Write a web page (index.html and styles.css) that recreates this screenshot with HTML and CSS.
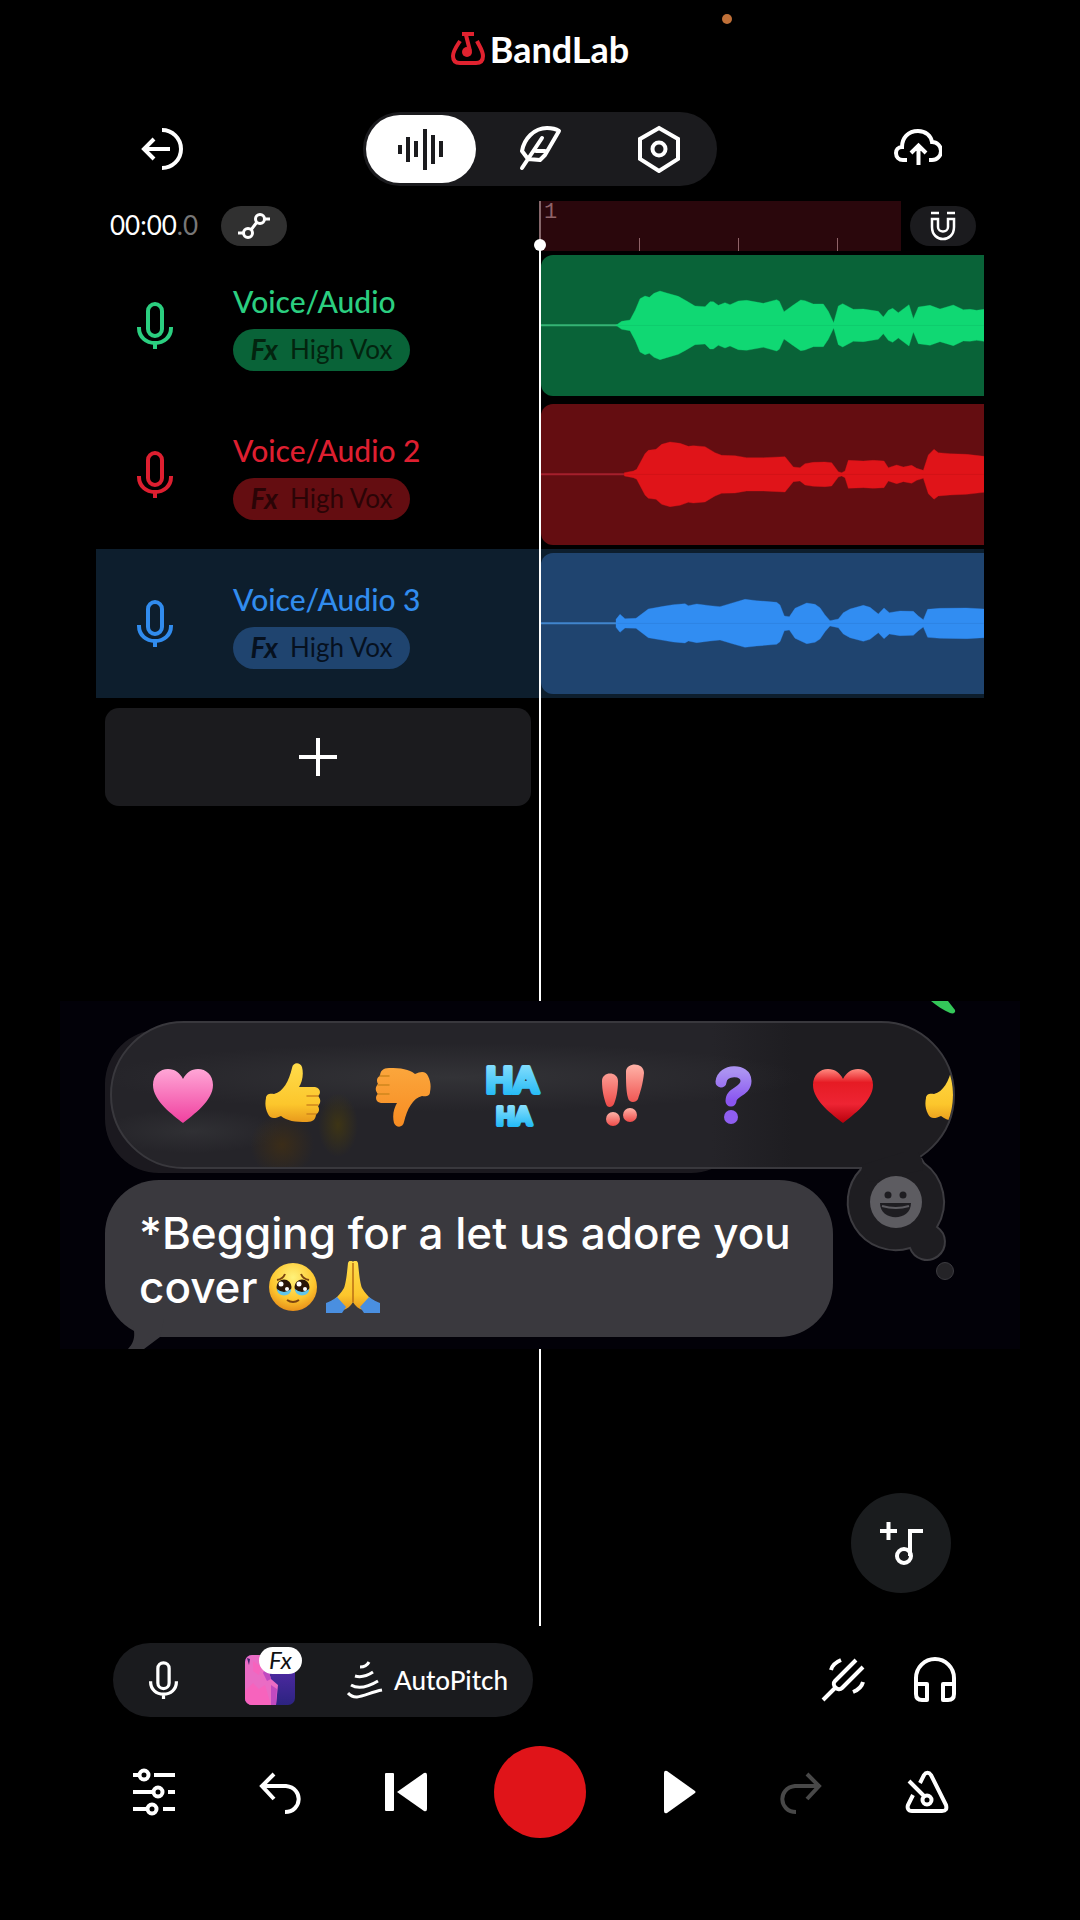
FILE: index.html
```html
<!DOCTYPE html>
<html lang="en">
<head>
<meta charset="utf-8">
<meta name="viewport" content="width=device-width, initial-scale=1">
<title>BandLab Studio</title>
<link rel="stylesheet" href="styles.css">
</head>
<body>
<svg class="defs" width="0" height="0" aria-hidden="true">
  <defs>
    <linearGradient id="pink" x1="0" y1="0" x2="0" y2="1"><stop offset="0" stop-color="#ffa6d6"/><stop offset="1" stop-color="#f0409f"/></linearGradient>
    <linearGradient id="red" x1="0" y1="0" x2="0" y2="1"><stop offset="0" stop-color="#ff8a80"/><stop offset=".25" stop-color="#e61b24"/><stop offset=".65" stop-color="#ee2433"/><stop offset="1" stop-color="#b8000c"/></linearGradient>
    <linearGradient id="yellow" x1="0" y1="0" x2="0" y2="1"><stop offset="0" stop-color="#ffdc4a"/><stop offset=".7" stop-color="#fcc62c"/><stop offset="1" stop-color="#e89a1c"/></linearGradient>
    <linearGradient id="orange" x1="0" y1="1" x2="0" y2="0"><stop offset="0" stop-color="#fba63c"/><stop offset="1" stop-color="#f78c22"/></linearGradient>
    <linearGradient id="coral" x1="0" y1="0" x2="0" y2="1"><stop offset="0" stop-color="#ffb3a8"/><stop offset="1" stop-color="#ee4a48"/></linearGradient>
    <linearGradient id="violet" x1="0" y1="0" x2="0" y2="1"><stop offset="0" stop-color="#ab92f2"/><stop offset="1" stop-color="#8a55f0"/></linearGradient>
    <linearGradient id="sky" x1="0" y1="0" x2="0" y2="1"><stop offset="0" stop-color="#9be6ff"/><stop offset="1" stop-color="#14b4f4"/></linearGradient>
    <radialGradient id="face" cx=".5" cy=".3" r=".7"><stop offset="0" stop-color="#fff27a"/><stop offset=".65" stop-color="#fdc62e"/><stop offset="1" stop-color="#e8901a"/></radialGradient>
    <symbol id="mic" viewBox="0 0 36 48">
      <g fill="none" stroke="currentColor" stroke-width="4">
        <rect x="11" y="2" width="14" height="32" rx="7"/>
        <path d="M2 25v1c0 9 7 15 16 15s16-6 16-15v-1M18 41v6"/>
      </g>
    </symbol>
    <symbol id="heart" viewBox="0 0 64 64">
      <path d="M32 60C22 52 2 38 2 22 2 12 9 6 17 6c7 0 12 4 15 10C35 10 40 6 47 6c8 0 15 6 15 16 0 16-20 30-30 38z"/>
    </symbol>
    <symbol id="thumb" viewBox="0 0 64 64">
      <path d="M5 35c0-4 4-5 8-4C22 29 28 18 31 5c1-6 8-6 10-1 2 8 0 15-3 20h16c6 1 6 7 3 9 3 3 3 7 0 10 2 3 1 7-2 8 0 5-3 8-9 8-12 0-20-1-26-6-6 3-11 3-13-2-3-6-3-11-2-16z"/>
      <path d="M46 33h11M46 42h11M46 51h9" fill="none" stroke="#cf861c" stroke-width="1.5" stroke-linecap="round"/>
    </symbol>
  </defs>
</svg>

<div class="app">
  <header class="brand">
    <svg class="brand-logo" viewBox="0 0 34 34" aria-hidden="true">
      <path d="M9 9C5 15 2 19 2 24c0 5 3 7 7 7h16c4 0 7-2 7-7 0-5-3-9-6-15" fill="none" stroke="#e0222f" stroke-width="4"/>
      <path d="M11 2h12M15 3l4 16" fill="none" stroke="#e0222f" stroke-width="4"/>
      <circle cx="16" cy="20" r="5" fill="#e0222f"/>
    </svg>
    <h1 class="brand-name">BandLab</h1>
    <span class="mic-indicator"></span>
  </header>

  <nav class="toolbar">
    <button class="icon-button" aria-label="Exit">
      <svg width="44" height="44" viewBox="0 0 44 44" fill="none" stroke="#fff" stroke-width="4"><path d="M22 3c10 0 19 8 19 19s-9 19-19 19M3 22h27M14 12L4 22l10 10"/></svg>
    </button>
    <div class="view-tabs">
      <button class="view-tab active" aria-label="Tracks">
        <svg width="48" height="48" viewBox="0 0 48 48" fill="none" stroke="#1b1b1e" stroke-width="4"><path d="M3 20v9M11 12v25M19 16v16M28 4v41M36 10v29M44 16v16"/></svg>
      </button>
      <button class="view-tab" aria-label="Lyrics">
        <svg width="48" height="48" viewBox="0 0 48 48" fill="none" stroke="#fff" stroke-width="4" stroke-linecap="round" stroke-linejoin="round"><path d="M6 43l6-9 14-21M12 34L6 26C8 14 18 3 31 3c5 0 9 1 12 3L29 30l-5 5-12-1M20 26h9"/></svg>
      </button>
      <button class="view-tab" aria-label="Settings">
        <svg width="48" height="48" viewBox="0 0 48 48" fill="none" stroke="#fff" stroke-width="4"><path d="M24 3l19 11v20L24 46 5 34V14z"/><circle cx="24" cy="24" r="6.5"/></svg>
      </button>
    </div>
    <button class="icon-button" aria-label="Upload">
      <svg width="48" height="48" viewBox="0 0 48 48" fill="none" stroke="#fff" stroke-width="4"><path d="M13 35H9c-4 0-7-3-7-7 0-3 2-6 6-6 0-9 6-16 16-16 8 0 13 5 14 11 5 0 9 4 9 9s-4 9-9 9h-3M24.500 40V22M17 28l7.500-7.500L32 28"/></svg>
    </button>
  </nav>

  <main class="timeline">
    <div class="ruler-row">
      <div class="clock-cell">
        <time class="clock">00:00<span class="clock-fraction">.0</span></time>
        <button class="pill-button light" aria-label="Automation">
          <svg width="34" height="28" viewBox="0 0 34 28" fill="none" stroke="#fff" stroke-width="3"><circle cx="11" cy="21" r="4.500"/><circle cx="23" cy="7" r="4.500"/><path d="M1 21h6M14 18l6-8M27 7h6"/></svg>
        </button>
      </div>
      <div class="ruler-cell">
        <div class="ruler"><span class="bar-number">1</span><i class="tick"></i><i class="tick"></i><i class="tick"></i></div>
        <button class="pill-button" aria-label="Snap to grid">
          <svg width="28" height="32" viewBox="0 0 28 32" fill="none" stroke="#fff" stroke-width="2.500"><path d="M2 3h8M18 3h8M3 9h6v8c0 6 10 6 10 0V9h6v8c0 16-22 16-22 0z"/></svg>
        </button>
      </div>
    </div>

    <section class="track green">
      <div class="track-head">
        <svg class="track-mic" aria-hidden="true"><use href="#mic"/></svg>
        <div class="track-info">
          <h2 class="track-name">Voice/Audio</h2>
          <button class="fx-chip"><b class="fx">Fx</b>High Vox</button>
        </div>
      </div>
      <div class="clip">
        <svg class="wave" viewBox="33 0 1329 423" preserveAspectRatio="none" aria-hidden="true">
          <g transform="translate(0 211)">
            <path class="silence" d="M33 0H262"/>
            <path id="wave1" d="M258 0L275 12 300 16 316 46 330 80 345 88 358 84 372 96 390 103 410 97 445 87 470 73 495 58 525 56 540 71 550 71 565 60 585 68 600 62 625 73 650 75 700 66 740 77 748 72 762 41 790 61 812 76 825 74 850 64 880 64 895 42 911 8 925 58 938 65 970 48 1000 49 1045 42 1060 25 1075 45 1088 51 1105 38 1137 62 1150 20 1165 55 1200 60 1230 49 1270 61 1300 47 1320 48 1340 45 1362 48V0z"/>
            <use href="#wave1" transform="scale(1 -1)"/>
          </g>
        </svg>
      </div>
    </section>

    <section class="track red">
      <div class="track-head">
        <svg class="track-mic" aria-hidden="true"><use href="#mic"/></svg>
        <div class="track-info">
          <h2 class="track-name">Voice/Audio 2</h2>
          <button class="fx-chip"><b class="fx">Fx</b>High Vox</button>
        </div>
      </div>
      <div class="clip">
        <svg class="wave" viewBox="33 0 1329 423" preserveAspectRatio="none" aria-hidden="true">
          <g transform="translate(0 211)">
            <path class="silence" d="M33 0H290"/>
            <path id="wave2" d="M283 0V5L310 10 320 15 345 62 355 72 378 75 395 90 420 97 450 93 475 84 490 86 525 83 555 65 575 57 615 56 650 50 700 50 765 53 790 22 810 20 825 32 850 36 885 37 905 35 925 8 935 5 945 10 955 42 1000 40 1030 42 1062 40 1075 20 1100 28 1120 22 1145 27 1160 18 1180 12 1195 58 1212 75 1225 65 1260 62 1310 60 1362 54V0z"/>
            <use href="#wave2" transform="scale(1 -1)"/>
          </g>
        </svg>
      </div>
    </section>

    <section class="track blue selected">
      <div class="track-head">
        <svg class="track-mic" aria-hidden="true"><use href="#mic"/></svg>
        <div class="track-info">
          <h2 class="track-name">Voice/Audio 3</h2>
          <button class="fx-chip"><b class="fx">Fx</b>High Vox</button>
        </div>
      </div>
      <div class="clip">
        <svg class="wave" viewBox="33 0 1329 423" preserveAspectRatio="none" aria-hidden="true">
          <g transform="translate(0 211)">
            <path class="silence" d="M33 0H262"/>
            <path id="wave3" d="M258 0V12L270 27 285 14 318 15 355 43 400 51 430 56 455 58 465 59 475 53 500 58 540 53 570 50 610 62 645 72 680 68 740 63 750 55 763 22 778 20 795 45 830 61 855 57 870 47 885 25 900 8 925 13 940 32 960 43 1000 54 1020 48 1045 28 1062 46 1078 32 1110 37 1150 36 1165 22 1180 11 1193 42 1230 45 1310 46 1362 43V0z"/>
            <use href="#wave3" transform="scale(1 -1)"/>
          </g>
        </svg>
      </div>
    </section>

    <button class="add-track" aria-label="Add track">
      <svg width="40" height="40" viewBox="0 0 40 40" stroke="#fff" stroke-width="4"><path d="M20 1v38M1 20h38"/></svg>
    </button>

    <div class="playhead"></div>

    <aside class="message-overlay">
      <svg class="leaf" width="28" height="13" viewBox="0 0 28 13" aria-hidden="true"><path d="M2 0h17l7 9c1 3-2 4-5 3C14 9 8 5 2 0z" fill="#34c759"/></svg>
      <div class="ghost-bubble"></div>
      <div class="reactions">
        <button class="reaction" aria-label="Pink heart"><svg class="emoji" fill="url(#pink)"><use href="#heart"/></svg></button>
        <button class="reaction" aria-label="Thumbs up"><svg class="emoji" fill="url(#yellow)"><use href="#thumb"/></svg></button>
        <button class="reaction" aria-label="Thumbs down"><svg class="emoji" viewBox="0 0 64 64" fill="url(#orange)"><use href="#thumb" width="64" height="64" transform="rotate(180 32 32)"/></svg></button>
        <button class="reaction" aria-label="Ha ha">
          <svg class="emoji haha" viewBox="0 0 64 64"><text x="31" y="30" font-size="36">HA</text><text x="33" y="62" font-size="24">HA</text></svg>
        </button>
        <button class="reaction" aria-label="Emphasize">
          <svg class="emoji" viewBox="0 0 64 64" fill="url(#coral)"><path d="M11 18c0-10 16-10 16 0 0 10-2 18-4 23-2 4-7 4-8 0-2-6-4-13-4-23zM35 8c1-9 18-9 18 2-1 11-4 20-6 26-2 4-9 4-10-1-2-7-2-17-2-27z"/><circle cx="22" cy="56" r="7"/><circle cx="39" cy="52" r="7"/></svg>
        </button>
        <button class="reaction" aria-label="Question">
          <svg class="emoji" viewBox="0 0 64 64"><path d="M20 19C21 6 45 5 45 18c0 11-15 10-15 20" fill="none" stroke="url(#violet)" stroke-width="11" stroke-linecap="round"/><circle cx="30" cy="54" r="7" fill="#8f5ef0"/></svg>
        </button>
        <button class="reaction" aria-label="Red heart"><svg class="emoji" fill="url(#red)"><use href="#heart"/></svg></button>
        <button class="reaction" aria-label="Thumbs up"><svg class="emoji" fill="url(#yellow)"><use href="#thumb"/></svg></button>
      </div>
      <svg class="thought" width="130" height="150" viewBox="0 0 130 150" role="img" aria-label="More reactions">
        <path d="M21 29A48 48 0 0 0 70 108A18 18 0 1 0 97 87A48 48 0 0 0 84 23L81 18" fill="#1e1d21" stroke="#3c3b40" stroke-width="2"/>
        <path d="M22 25V31L30 42 83 30 82 20 78 12H64z" fill="#1e1d21"/>
        <circle cx="105" cy="131" r="8.500" fill="#242327" stroke="#3c3b40"/>
        <circle cx="56" cy="62" r="26" fill="#5d5c61"/>
        <circle cx="48" cy="55" r="3.500" fill="#1e1d21"/><circle cx="63" cy="55" r="3.500" fill="#1e1d21"/>
        <path d="M40 63h31c0 19-31 19-31 0z" fill="#1e1d21"/><path d="M42 66q14 4 27 0" fill="none" stroke="#5d5c61" stroke-width="2"/>
      </svg>
      <p class="bubble">*Begging for a let us adore you cover
        <span class="inline-emojis">
          <svg width="48" height="48" viewBox="0 0 48 48" role="img" aria-label="Face holding back tears">
            <circle cx="24" cy="24" r="24" fill="url(#face)"/>
            <path d="M8 17q6-1 8-6M40 17q-6-1-8-6" fill="none" stroke="#7a4310" stroke-width="2"/>
            <circle cx="15" cy="24" r="7.500" fill="#2a1608"/><circle cx="33" cy="24" r="7.500" fill="#2a1608"/>
            <path d="M8 26q7 6 14 0c1 8-14 9-14 0zM26 26q7 6 14 0c1 8-14 9-14 0z" fill="#62c6ea"/>
            <circle cx="12" cy="21" r="2.500" fill="#fff"/><circle cx="30" cy="21" r="2.500" fill="#fff"/><circle cx="18" cy="26" r="2" fill="#fff"/><circle cx="36" cy="26" r="2" fill="#fff"/>
            <path d="M18 37q6 4 12 0" fill="none" stroke="#7a4310" stroke-width="2"/>
          </svg>
          <svg width="56" height="52" viewBox="0 0 56 52" role="img" aria-label="Folded hands">
            <path d="M23 2c1-3 4-3 5-1 1-2 4-2 5 1 1 10 2 20 4 25 3 5 6 8 9 11l-8 11c-4-1-8-4-10-8-2 4-6 7-10 8L10 38c3-3 6-6 9-11 2-5 3-15 4-25z" fill="url(#yellow)"/>
            <path d="M28 2v39" stroke="#b86d14" stroke-width="1.500"/>
            <path d="M12 36l9 10-4 6H1V42c3-1 7-3 11-6zM44 36l-9 10 4 6h16V42c-3-1-7-3-11-6z" fill="#4a8fe0"/>
          </svg>
        </span>
      </p>
      <svg class="tail" width="44" height="30" viewBox="0 0 44 30" aria-hidden="true"><path d="M10 0C14 8 18 20 8 30H24L40 18 44 0z" fill="#3a393e"/></svg>
    </aside>

    <button class="add-music" aria-label="Add music">
      <svg width="44" height="44" viewBox="0 0 44 44" fill="none" stroke="#fff" stroke-width="4"><path d="M1 10h17M9.500 1v18M31 35V10h13"/><circle cx="25" cy="35" r="7"/></svg>
    </button>
  </main>

  <div class="dock">
    <div class="input-pill">
      <button class="icon-button" aria-label="Microphone"><svg width="29" height="39"><use href="#mic"/></svg></button>
      <button class="preset" aria-label="Effects preset">
        <svg width="50" height="50" viewBox="0 0 50 50" aria-hidden="true">
          <defs><clipPath id="art"><rect width="50" height="50" rx="7"/></clipPath><linearGradient id="ink" x1="0" y1="0" x2="0" y2="1"><stop offset="0" stop-color="#5c2cb0"/><stop offset="1" stop-color="#2c2380"/></linearGradient></defs>
          <g clip-path="url(#art)"><rect width="50" height="50" fill="url(#ink)"/><path d="M0 0h18l4 10 4 14 7 6-2 20H0z" fill="#ea6cc4"/><path d="M0 50V36l8-8 6 6 6-4 6 20zM8 6l8 6-2 8-6-4z" fill="#f763bd"/><path d="M22 10l4 14-4 2-4-8zM26 30l6 4-1 16h-5z" fill="#c04ac0"/><path d="M2 3l3 1-1 6z" fill="#43226e"/></g>
        </svg>
        <span class="fx-badge">Fx</span>
      </button>
      <button class="autopitch">
        <svg width="36" height="40" viewBox="0 0 36 40" fill="none" stroke="#fff" stroke-width="3" aria-hidden="true"><path d="M13 7c4 0 7-1 9-5M8 16c7 2 12 0 18-4M4 25c8 5 17 2 27-4M1 33c8 9 18 0 34-3"/></svg>
        AutoPitch
      </button>
    </div>
    <div class="dock-tools">
      <button class="icon-button" aria-label="Tuner">
        <svg width="44" height="44" viewBox="0 0 44 44" fill="none" stroke="#fff" stroke-width="4"><path d="M2 42l12-12M35 2L14 23c-4 4 3 11 7 7l21-21M10 12c1-4 5-8 10-10M42 24c-1 4-5 8-10 10"/></svg>
      </button>
      <button class="icon-button" aria-label="Monitoring">
        <svg width="44" height="46" viewBox="0 0 44 46" fill="none" stroke="#fff" stroke-width="4" stroke-linejoin="round"><path d="M3 27V21a19 19 0 0 1 38 0v6M3 27h11v16H9c-4 0-6-2-6-6zM41 27H30v16h5c4 0 6-2 6-6z"/></svg>
      </button>
    </div>
  </div>

  <footer class="transport">
    <button class="transport-button" aria-label="Mixer">
      <svg width="44" height="48" viewBox="0 0 44 48" fill="none" stroke="#fff" stroke-width="4"><circle cx="12" cy="7" r="4.500"/><circle cx="26" cy="24" r="4.500"/><circle cx="20" cy="41" r="4.500"/><path d="M1 7h6M22 7h21M1 24h20M36 24h7M1 41h14M31 41h12"/></svg>
    </button>
    <button class="transport-button" aria-label="Undo">
      <svg width="44" height="44" viewBox="0 0 44 44" fill="none" stroke="#fff" stroke-width="4"><path d="M16 4L4 16l12 13M4 16h24c18 2 16 26-1 26"/></svg>
    </button>
    <button class="transport-button" aria-label="Back to start">
      <svg width="44" height="40" viewBox="0 0 44 40" fill="#fff"><rect x="1" y="1" width="9" height="38" rx="1"/><path d="M13 20L40 1q3-1 3 2v34q0 3-3 2z"/></svg>
    </button>
    <button class="record" aria-label="Record"></button>
    <button class="transport-button" aria-label="Play">
      <svg width="42" height="44" viewBox="-8 0 42 44" fill="#fff"><path d="M2 3q0-3 3-2l28 20q1 1 0 2L5 43q-3 1-3-2z"/></svg>
    </button>
    <button class="transport-button" aria-label="Redo" disabled>
      <svg width="44" height="44" viewBox="0 0 44 44" fill="none" stroke="#484848" stroke-width="4"><path d="M28 4l12 12-12 13M40 16H16C-2 18 0 42 17 42"/></svg>
    </button>
    <button class="transport-button" aria-label="Metronome">
      <svg width="44" height="44" viewBox="0 0 44 44" fill="none" stroke="#fff" stroke-width="4"><path d="M15 13l4-8c2-3 5-3 7 0l15 30c1 4 0 6-4 6H7c-4 0-5-3-4-6l5-10M4 11l15 15"/><circle cx="22" cy="30" r="4.500"/></svg>
    </button>
  </footer>
</div>
</body>
</html>
```

FILE: styles.css
```css
* { box-sizing: border-box; }

body {
  margin: 0;
  background: #000;
  color: #fff;
  font-family: Lato, "Open Sans", sans-serif;
}

h1, h2, p { margin: 0; }

button {
  display: flex;
  align-items: center;
  justify-content: center;
  padding: 0;
  border: 0;
  background: none;
  color: inherit;
  font: inherit;
}

svg { display: block; flex: none; }
.defs { position: absolute; }

.app { margin: 0 96px; padding-bottom: 82px; }

/* Header */
.brand {
  position: relative;
  display: flex;
  align-items: center;
  justify-content: center;
  gap: 5px;
  height: 98px;
}
.brand-logo { width: 34px; height: 34px; }
.brand-name { font-size: 36px; line-height: 40px; font-weight: 700; }
.mic-indicator {
  position: absolute;
  top: 14px;
  left: calc(50% + 182px);
  width: 10px;
  height: 10px;
  border-radius: 50%;
  background: #c07038;
}

.toolbar {
  display: flex;
  align-items: center;
  justify-content: space-between;
  margin-top: 14px;
  padding: 0 34px;
}
.icon-button { width: 64px; height: 64px; }
.view-tabs {
  display: flex;
  gap: 9px;
  padding: 3px;
  border-radius: 37px;
  background: #1b1b1e;
}
.view-tab { width: 110px; height: 68px; border-radius: 34px; }
.view-tab.active { background: #fff; }

/* Timeline */
.timeline { position: relative; margin-top: 15px; padding-bottom: 33px; }

.ruler-row, .track { display: grid; grid-template-columns: 1fr 1fr; }
.ruler-row { height: 50px; }
.clock-cell, .ruler-cell { display: flex; align-items: center; }
.clock { width: 125px; padding: 0 0 2px 14px; font-size: 26px; line-height: 30px; }
.clock-fraction { color: #777; }
.pill-button { width: 66px; height: 40px; border-radius: 20px; background: #1b1b1e; }
.pill-button.light { background: #303030; }
.ruler-cell { gap: 9px; padding-right: 8px; }
.ruler {
  position: relative;
  display: flex;
  flex: 1;
  align-items: flex-end;
  gap: 98px;
  height: 50px;
  padding-left: 99px;
  background: #2a070c;
}
.bar-number {
  position: absolute;
  top: 2px;
  left: 4px;
  color: #8f6368;
  font: 22px/20px "Liberation Mono", monospace;
}
.tick { width: 1px; height: 13px; background: #8f6368; }

.track { height: 149px; padding: 4px 0; }
.green { --bright: #10d873; --name: #2bcf80; --dim: #096338; --line: #35b474; --ink: #03240f; }
.red { --bright: #e01419; --name: #de1f30; --dim: #640d11; --line: #a51f2c; --ink: #2a0406; }
.blue { --bright: #318df2; --name: #318cee; --dim: #1f446f; --line: #4185cc; --ink: #06111f; }
.selected { background: #0d1e2d; }

.track-head { display: flex; align-items: center; gap: 60px; padding-left: 41px; }
.track-mic { width: 36px; height: 48px; color: var(--name); }
.track-info { display: flex; flex-direction: column; align-items: flex-start; gap: 8px; }
.track-name { color: var(--name); font-size: 30px; line-height: 40px; font-weight: 500; }
.fx-chip {
  gap: 12px;
  width: 177px;
  height: 42px;
  padding-bottom: 2px;
  border-radius: 21px;
  background: var(--dim);
  color: var(--ink);
  font-size: 26px;
}
.fx { font-size: 28px; line-height: 32px; font-style: italic; }
.clip {
  margin-left: 1px;
  overflow: hidden;
  border-radius: 12px 0 0 12px;
  background: var(--dim);
}
.wave { width: 100%; height: 100%; fill: var(--bright); stroke: var(--bright); }
.silence { stroke: var(--line); stroke-width: 6; }

.add-track {
  width: calc(50% - 18px);
  height: 98px;
  margin: 10px 9px 0;
  border-radius: 14px;
  background: #1b1b1e;
}

.playhead {
  position: absolute;
  top: 0;
  bottom: 0;
  left: calc(50% - 1px);
  width: 2px;
  background: linear-gradient(#86676b 44px, #fff 44px);
}
.playhead::before {
  content: "";
  position: absolute;
  top: 38px;
  left: -5px;
  width: 12px;
  height: 12px;
  border-radius: 50%;
  background: #fff;
}

/* Message overlay */
.message-overlay {
  position: relative;
  height: 348px;
  margin: 195px -36px 0;
  padding-top: 20px;
  background: #020108;
}
.leaf { position: absolute; top: 0; right: 63px; }
.ghost-bubble {
  position: absolute;
  top: 29px;
  left: 45px;
  width: 640px;
  height: 143px;
  border-radius: 54px;
  background: #1b191f;
}
.reactions {
  position: relative;
  display: flex;
  align-items: center;
  gap: 46px;
  height: 148px;
  margin: 0 65px 0 50px;
  padding-left: 39px;
  overflow: hidden;
  border: 2px solid #39383d;
  border-radius: 74px;
  background:
    radial-gradient(circle at 170px 122px, #49320d99, transparent 32px),
    radial-gradient(ellipse 20px 32px at 226px 102px, #4d3f0899, transparent),
    radial-gradient(ellipse 350px 34px at 340px 54px, #333337, transparent),
    radial-gradient(ellipse 90px 22px at 80px 108px, #303034, transparent),
    linear-gradient(90deg, #252429 600px, #1e1d21 680px);
}
.reaction { flex: none; width: 64px; height: 64px; }
.emoji { width: 64px; height: 64px; overflow: visible; }
.haha text {
  fill: url(#sky);
  stroke: url(#sky);
  stroke-width: 4;
  stroke-linejoin: round;
  font-family: Lato, sans-serif;
  font-weight: 900;
  text-anchor: middle;
}
.thought { position: absolute; top: 139px; right: 50px; }
.bubble {
  position: relative;
  max-width: 728px;
  margin: 11px 0 0 45px;
  padding: 26px 16px 23px 34px;
  border-radius: 54px;
  background: #3a393e;
  font: 500 44px/54px Inter, sans-serif;
}
.inline-emojis { display: inline-flex; gap: 8px; height: 54px; align-items: center; vertical-align: top; }
.tail { position: absolute; bottom: 0; left: 60px; }

.add-music {
  width: 100px;
  height: 100px;
  margin: 144px 33px 0 auto;
  border-radius: 50%;
  background: #1a1c1e;
}

/* Dock */
.dock { display: flex; align-items: center; justify-content: space-between; margin-top: 17px; padding: 0 17px; }
.input-pill {
  display: flex;
  align-items: center;
  height: 74px;
  width: 420px;
  padding: 0 18px;
  border-radius: 37px;
  background: #1a1b1e;
}
.preset { position: relative; margin-left: 50px; }
.fx-badge {
  position: absolute;
  top: -8px;
  left: 14px;
  width: 43px;
  height: 27px;
  border-radius: 14px;
  background: #fff;
  color: #111;
  font-size: 24px;
  font-style: italic;
  line-height: 25px;
}
.autopitch { gap: 11px; margin-left: 52px; font-size: 26px; line-height: 30px; font-weight: 500; }
.dock-tools { display: flex; gap: 28px; }

/* Transport */
.transport { display: flex; align-items: center; justify-content: space-between; margin-top: 29px; padding: 0 20px; }
.transport-button { width: 75px; height: 75px; }
.record { width: 92px; height: 92px; border-radius: 50%; background: #e01419; }
```
